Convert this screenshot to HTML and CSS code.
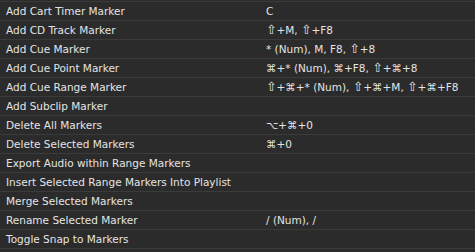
FILE: index.html
```html
<!DOCTYPE html>
<html lang="en">
    <head>
        <meta charset="UTF-8">
        <title>Marker Shortcuts</title>
        <link rel="stylesheet" href="styles.css">
    </head>
    <body>
        <div class="shortcut-list">
            <div class="row"><span class="command">Add Cart Timer Marker</span><span class="keys">C</span></div>
            <div class="row"><span class="command">Add CD Track Marker</span><span class="keys"><span class="shift">⇧</span>+M, <span class="shift">⇧</span>+F8</span></div>
            <div class="row"><span class="command">Add Cue Marker</span><span class="keys">* (Num), M, F8, <span class="shift">⇧</span>+8</span></div>
            <div class="row"><span class="command">Add Cue Point Marker</span><span class="keys">⌘+* (Num), ⌘+F8, <span class="shift">⇧</span>+⌘+8</span></div>
            <div class="row"><span class="command">Add Cue Range Marker</span><span class="keys"><span class="shift">⇧</span>+⌘+* (Num), <span class="shift">⇧</span>+⌘+M, <span class="shift">⇧</span>+⌘+F8</span></div>
            <div class="row"><span class="command">Add Subclip Marker</span><span class="keys"></span></div>
            <div class="row"><span class="command">Delete All Markers</span><span class="keys">⌥+⌘+0</span></div>
            <div class="row"><span class="command">Delete Selected Markers</span><span class="keys">⌘+0</span></div>
            <div class="row"><span class="command">Export Audio within Range Markers</span><span class="keys"></span></div>
            <div class="row"><span class="command">Insert Selected Range Markers Into Playlist</span><span class="keys"></span></div>
            <div class="row"><span class="command">Merge Selected Markers</span><span class="keys"></span></div>
            <div class="row"><span class="command">Rename Selected Marker</span><span class="keys">/ (Num), /</span></div>
            <div class="row"><span class="command">Toggle Snap to Markers</span><span class="keys"></span></div>
        </div>
    </body>
</html>
```
FILE: styles.css
```css
body {
    margin: 0;
    background-color: #2b2b2b;
    font-family: "DejaVu Sans", sans-serif;
    font-size: 10.5px;
    color: #e4e4e4;
}

.shortcut-list {
    padding-top: 1px;
}

.row {
    display: grid;
    grid-template-columns: 260px 1fr;
    height: 18px;
    line-height: 18px;
    border-top: 1px solid #3b3b3b;
    padding-left: 6px;
}

.row:last-child {
    border-bottom: 1px solid #3b3b3b;
}

.keys {
    white-space: nowrap;
}

.shift {
    font-size: 12.5px;
    line-height: 0;
}
```
